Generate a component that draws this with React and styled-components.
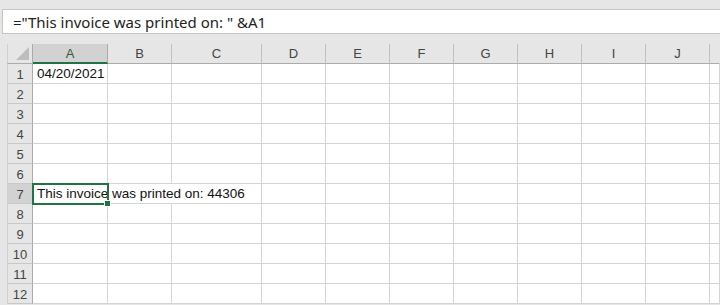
import React from "react";
import styled, { createGlobalStyle } from "styled-components";

const columns = [
  { name: "A", width: 75 },
  { name: "B", width: 64 },
  { name: "C", width: 90 },
  { name: "D", width: 64 },
  { name: "E", width: 64 },
  { name: "F", width: 64 },
  { name: "G", width: 64 },
  { name: "H", width: 64 },
  { name: "I", width: 64 },
  { name: "J", width: 64 },
];

const rows = [1, 2, 3, 4, 5, 6, 7, 8, 9, 10, 11, 12];

const values = {
  "A1": "04/20/2021",
  "A7": "This invoice was printed on: 44306",
};

const activeCol = "A";
const activeRow = 7;

// cells that text from A7 runs over, so their right gridline is hidden
const spilled = { "A7": true, "B7": true };

export default function App() {
  return (
    <>
      <GlobalStyle />
      <Page>
        <FormulaBar>="This invoice was printed on: " &amp;A1</FormulaBar>
        <Sheet>
          <Grid $cols={columns.map((c) => c.width + "px").join(" ")}>
            <Corner>
              <CornerMark />
            </Corner>
            {columns.map((c) => (
              <ColHeader key={c.name} $active={c.name === activeCol}>
                {c.name}
              </ColHeader>
            ))}
            <ColHeader $filler />
            {rows.map((r) => (
              <React.Fragment key={r}>
                <RowHeader $active={r === activeRow}>{r}</RowHeader>
                {columns.map((c) => {
                  const id = c.name + r;
                  const selected = c.name === activeCol && r === activeRow;
                  return (
                    <Cell key={id} $spilled={spilled[id]}>
                      {values[id]}
                      {selected && (
                        <Selection>
                          <FillHandle />
                        </Selection>
                      )}
                    </Cell>
                  );
                })}
                <Cell />
              </React.Fragment>
            ))}
          </Grid>
        </Sheet>
      </Page>
    </>
  );
}

const GlobalStyle = createGlobalStyle`
  body {
    margin: 0;
    background: #e6e6e6;
    font-family: "Liberation Sans", Arial, sans-serif;
  }
`;

const Page = styled.div`
  width: 720px;
  height: 305px;
  overflow: hidden;
  padding-top: 9px;
  box-sizing: border-box;
  background: #e6e6e6;
`;

const FormulaBar = styled.div`
  margin-left: 2px;
  height: 25px;
  box-sizing: border-box;
  background: #fff;
  border: 1px solid #c6c6c6;
  border-right: none;
  padding-left: 10px;
  display: flex;
  align-items: center;
  font-family: "Noto Sans", "Open Sans", sans-serif;
  font-size: 15px;
  color: #222;
  white-space: nowrap;
`;

const Sheet = styled.div`
  margin-top: 10px;
  padding-left: 7px;
  display: flex;
`;

const Grid = styled.div`
  flex: 1;
  display: grid;
  grid-template-columns: 26px ${(p) => p.$cols} 1fr;
  grid-auto-rows: 20px;
  background: #fff;
`;

const Corner = styled.div`
  display: flex;
  justify-content: flex-end;
  align-items: flex-end;
  padding: 0 3px 3px 0;
  background: #e6e6e6;
  border-right: 1px solid #ababab;
  border-bottom: 1px solid #ababab;
  border-left: 1px solid #d0d0d0;
  box-sizing: border-box;
`;

const CornerMark = styled.div`
  width: 13px;
  height: 13px;
  background: #bdbdbd;
  clip-path: polygon(100% 0, 100% 100%, 0 100%);
`;

const ColHeader = styled.div`
  box-sizing: border-box;
  background: ${(p) => (p.$active ? "#d2d2d2" : "#e6e6e6")};
  border-right: 1px solid ${(p) => (p.$active ? "#ababab" : p.$filler ? "transparent" : "#c0c0c0")};
  border-bottom: ${(p) => (p.$active ? "2px solid #217346" : "1px solid #ababab")};
  color: ${(p) => (p.$active ? "#2f5a42" : "#444")};
  font-size: 13px;
  display: flex;
  align-items: center;
  justify-content: center;
  padding-top: ${(p) => (p.$active ? "1px" : "0")};
`;

const RowHeader = styled.div`
  box-sizing: border-box;
  background: ${(p) => (p.$active ? "#d2d2d2" : "#e6e6e6")};
  border-left: 1px solid #d0d0d0;
  border-right: 1px solid #ababab;
  border-bottom: 1px solid #c8c8c8;
  color: #444;
  font-size: 13px;
  display: flex;
  align-items: center;
  justify-content: center;
  padding-top: 1px;
`;

const Cell = styled.div`
  position: relative;
  box-sizing: border-box;
  display: flex;
  align-items: flex-end;
  padding: 0 0 1px 4px;
  border-right: 1px solid ${(p) => (p.$spilled ? "transparent" : "#d4d4d4")};
  border-bottom: 1px solid #d4d4d4;
  font-size: 13.5px;
  line-height: 17px;
  color: #111;
  white-space: nowrap;
  overflow: visible;
`;

const Selection = styled.div`
  position: absolute;
  left: -1px;
  top: -1px;
  right: -2px;
  bottom: -2px;
  border: 2px solid #217346;
  z-index: 2;
`;

const FillHandle = styled.div`
  position: absolute;
  right: -4px;
  bottom: -4px;
  width: 5px;
  height: 5px;
  background: #217346;
  border: 1px solid #fff;
`;
